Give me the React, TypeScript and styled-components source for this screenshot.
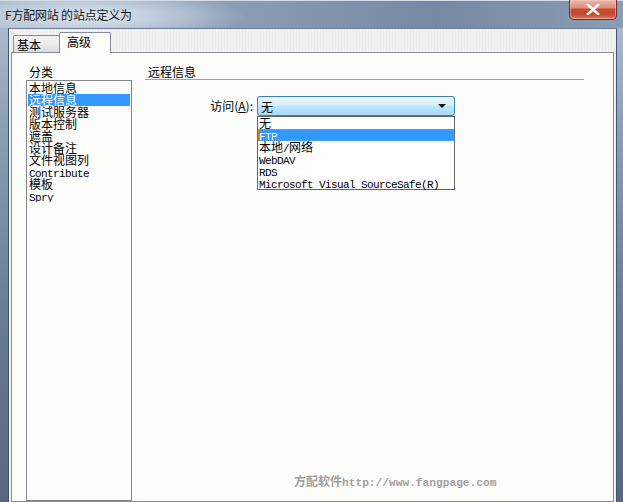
import React from "react";
import styled, { createGlobalStyle } from "styled-components";

const GlobalStyle = createGlobalStyle`
  html, body {
    margin: 0;
    padding: 0;
    background: #fff;
  }
  body {
    font-family: "Noto Sans CJK SC", "Liberation Sans", sans-serif;
    overflow: hidden;
  }
`;

const categories = [
  "本地信息",
  "远程信息",
  "测试服务器",
  "版本控制",
  "遮盖",
  "设计备注",
  "文件视图列",
  "Contribute",
  "模板",
  "Spry",
];

const accessOptions = [
  "无",
  "FTP",
  "本地/网络",
  "WebDAV",
  "RDS",
  "Microsoft Visual SourceSafe(R)",
];

const isLatin = (s: string) => /^[\x00-\x7f]+$/.test(s);

const App: React.FC = () => {
  return (
    <>
      <GlobalStyle />
      <Window>
        <TitleBar>
          <Title>F方配网站 的站点定义为</Title>
          <CloseButton>
            <svg width="14" height="11" viewBox="0 0 14 11">
              <path
                d="M2 1 L12 10 M12 1 L2 10"
                stroke="#fff"
                strokeWidth="2.6"
                strokeLinecap="square"
              />
            </svg>
          </CloseButton>
        </TitleBar>
        <Body>
          <Client>
            <TabRow>
              <Tab>基本</Tab>
              <Tab active>高级</Tab>
            </TabRow>
            <Panel>
              <LeftColumn>
                <SectionLabel>分类</SectionLabel>
                <ListBox>
                  {categories.map((c) => (
                    <ListItem key={c} selected={c === "远程信息"}>
                      {isLatin(c) ? <Mono>{c}</Mono> : c}
                    </ListItem>
                  ))}
                </ListBox>
              </LeftColumn>
              <RightColumn>
                <Heading>远程信息</Heading>
                <FormRow>
                  <FieldLabel>
                    访问(<u>A</u>):
                  </FieldLabel>
                  <SelectWrap>
                    <SelectBox>
                      <span>无</span>
                      <Arrow />
                    </SelectBox>
                    <DropList>
                      {accessOptions.map((o) => (
                        <DropItem key={o} highlighted={o === "FTP"}>
                          {o.split(/([\x00-\x7f]+)/).map((part, i) =>
                            part === "" ? null : isLatin(part) ? (
                              <Mono key={i}>{part}</Mono>
                            ) : (
                              <span key={i}>{part}</span>
                            )
                          )}
                        </DropItem>
                      ))}
                    </DropList>
                  </SelectWrap>
                </FormRow>
              </RightColumn>
            </Panel>
          </Client>
        </Body>
        <Watermark>
          方配软件<WatermarkMono>http://www.fangpage.com</WatermarkMono>
        </Watermark>
      </Window>
    </>
  );
};

export default App;

const Window = styled.div`
  position: relative;
  width: 623px;
  height: 502px;
  overflow: hidden;
  display: flex;
  flex-direction: column;
  background: linear-gradient(180deg, #b3c2d3 0%, #8d9fb5 25%, #6c7e96 60%, #56677f 100%);
`;

const TitleBar = styled.div`
  height: 28px;
  flex: 0 0 28px;
  display: flex;
  align-items: flex-start;
  padding-left: 5px;
  box-sizing: border-box;
  background:
    radial-gradient(ellipse 200px 34px at 95px 15px, rgba(235, 242, 250, 0.85), rgba(235, 242, 250, 0) 75%),
    linear-gradient(90deg, #a9b9cb 0%, #8699b1 45%, #7689a2 70%, #8b9db4 100%);
  border-top: 1px solid #d4dde8;
`;

const Title = styled.div`
  margin-top: 6px;
  font-size: 12px;
  line-height: 16px;
  color: #101820;
  letter-spacing: -0.2px;
`;

const CloseButton = styled.div`
  margin-left: auto;
  margin-right: 6px;
  margin-top: -1px;
  width: 48px;
  height: 20px;
  box-sizing: border-box;
  display: flex;
  align-items: center;
  justify-content: center;
  border: 1px solid #6e2e26;
  border-top: none;
  border-radius: 0 0 5px 5px;
  background: linear-gradient(180deg, #eab8ac 0%, #dd8f7c 40%, #c84a33 50%, #c5472f 75%, #dc7a5c 100%);
  box-shadow: inset 0 0 0 1px rgba(255, 220, 210, 0.45);
`;

const Body = styled.div`
  flex: 1;
  display: flex;
  padding: 0 6px 0 8px;
  min-height: 0;
`;

const Client = styled.div`
  flex: 1;
  display: flex;
  flex-direction: column;
  padding: 0 2px;
  background: repeating-linear-gradient(90deg, #f1f1f1 0 2px, #eaeaea 2px 3px);
  border-left: 1px solid #46556b;
  border-right: 1px solid #46556b;
  border-top: 1px solid #6d7f97;
  min-height: 0;
`;

const TabRow = styled.div`
  height: 23px;
  flex: 0 0 23px;
  display: flex;
  align-items: flex-end;
  padding-left: 2px;
`;

const Tab = styled.div<{ active?: boolean }>`
  position: relative;
  z-index: ${(p) => (p.active ? 2 : 1)};
  box-sizing: border-box;
  width: ${(p) => (p.active ? "52px" : "47px")};
  height: ${(p) => (p.active ? "21px" : "17px")};
  margin-left: ${(p) => (p.active ? "-1px" : "0")};
  margin-bottom: ${(p) => (p.active ? "-1px" : "0")};
  padding: ${(p) => (p.active ? "1px 0 0 7px" : "1px 0 0 3px")};
  border: 1px solid #898c95;
  border-bottom: none;
  border-radius: 2px 2px 0 0;
  font-size: 12px;
  line-height: 15px;
  color: #000;
  background: ${(p) =>
    p.active ? "#fcfdfb" : "linear-gradient(180deg, #f3f3f3 0%, #ebebeb 50%, #dcdcdc 100%)"};
`;

const Panel = styled.div`
  position: relative;
  flex: 1;
  display: flex;
  border: 1px solid #898c95;
  background: #fcfdfb;
  min-height: 0;
`;

const LeftColumn = styled.div`
  display: flex;
  flex-direction: column;
  padding: 11px 0 0 14px;
`;

const SectionLabel = styled.div`
  height: 16px;
  padding-left: 3px;
  font-size: 12px;
  line-height: 16px;
  color: #000;
`;

const ListBox = styled.div`
  width: 106px;
  height: 440px;
  box-sizing: border-box;
  border: 1px solid #828790;
  background: #fdfefc;
  padding: 1px;
`;

const ListItem = styled.div<{ selected?: boolean }>`
  height: 12px;
  line-height: 12px;
  font-size: 12px;
  padding-left: 1px;
  white-space: nowrap;
  overflow: hidden;
  color: ${(p) => (p.selected ? "#fff" : "#000")};
  background: ${(p) => (p.selected ? "#3399ff" : "transparent")};
`;

const Mono = styled.span`
  font-family: "Liberation Mono", "DejaVu Sans Mono", monospace;
  font-size: 11px;
  letter-spacing: -0.6px;
`;

const RightColumn = styled.div`
  display: flex;
  flex-direction: column;
  margin-left: 13px;
`;

const Heading = styled.div`
  width: 439px;
  height: 27px;
  box-sizing: border-box;
  padding: 11px 0 0 3px;
  font-size: 12px;
  line-height: 15px;
  color: #000;
  border-bottom: 1px solid #a0a0a0;
`;

const FormRow = styled.div`
  display: flex;
  align-items: center;
  margin-top: 16px;
`;

const FieldLabel = styled.div`
  width: 108px;
  margin-right: 4px;
  text-align: right;
  font-size: 12px;
  line-height: 16px;
  color: #000;
`;

const SelectWrap = styled.div`
  position: relative;
  width: 198px;
`;

const SelectBox = styled.div`
  height: 20px;
  box-sizing: border-box;
  display: flex;
  align-items: center;
  padding: 0 8px 0 3px;
  border: 1px solid #3c7fb1;
  border-radius: 3px;
  font-size: 12px;
  color: #000;
  background: linear-gradient(180deg, #eaf6fd 0%, #d9f0fc 45%, #bee6fd 50%, #a7d9f5 100%);
`;

const Arrow = styled.span`
  margin-left: auto;
  width: 0;
  height: 0;
  border-left: 4px solid transparent;
  border-right: 4px solid transparent;
  border-top: 4px solid #000;
`;

const DropList = styled.div`
  position: absolute;
  top: 100%;
  left: 0;
  width: 198px;
  box-sizing: border-box;
  border: 1px solid #646464;
  background: #fff;
  z-index: 5;
`;

const DropItem = styled.div<{ highlighted?: boolean }>`
  height: 12px;
  line-height: 12px;
  font-size: 12px;
  padding-left: 1px;
  box-sizing: border-box;
  white-space: nowrap;
  color: ${(p) => (p.highlighted ? "#fff" : "#000")};
  background: ${(p) => (p.highlighted ? "#3399ff" : "transparent")};
  outline: ${(p) => (p.highlighted ? "1px dotted #e8892b" : "none")};
  outline-offset: -1px;
`;

const Watermark = styled.div`
  position: absolute;
  left: 294px;
  top: 474px;
  font-size: 12px;
  line-height: 14px;
  font-weight: bold;
  color: #a0a0a0;
  white-space: nowrap;
`;

const WatermarkMono = styled.span`
  font-family: "Liberation Mono", monospace;
  font-size: 11.2px;
  font-weight: bold;
`;
